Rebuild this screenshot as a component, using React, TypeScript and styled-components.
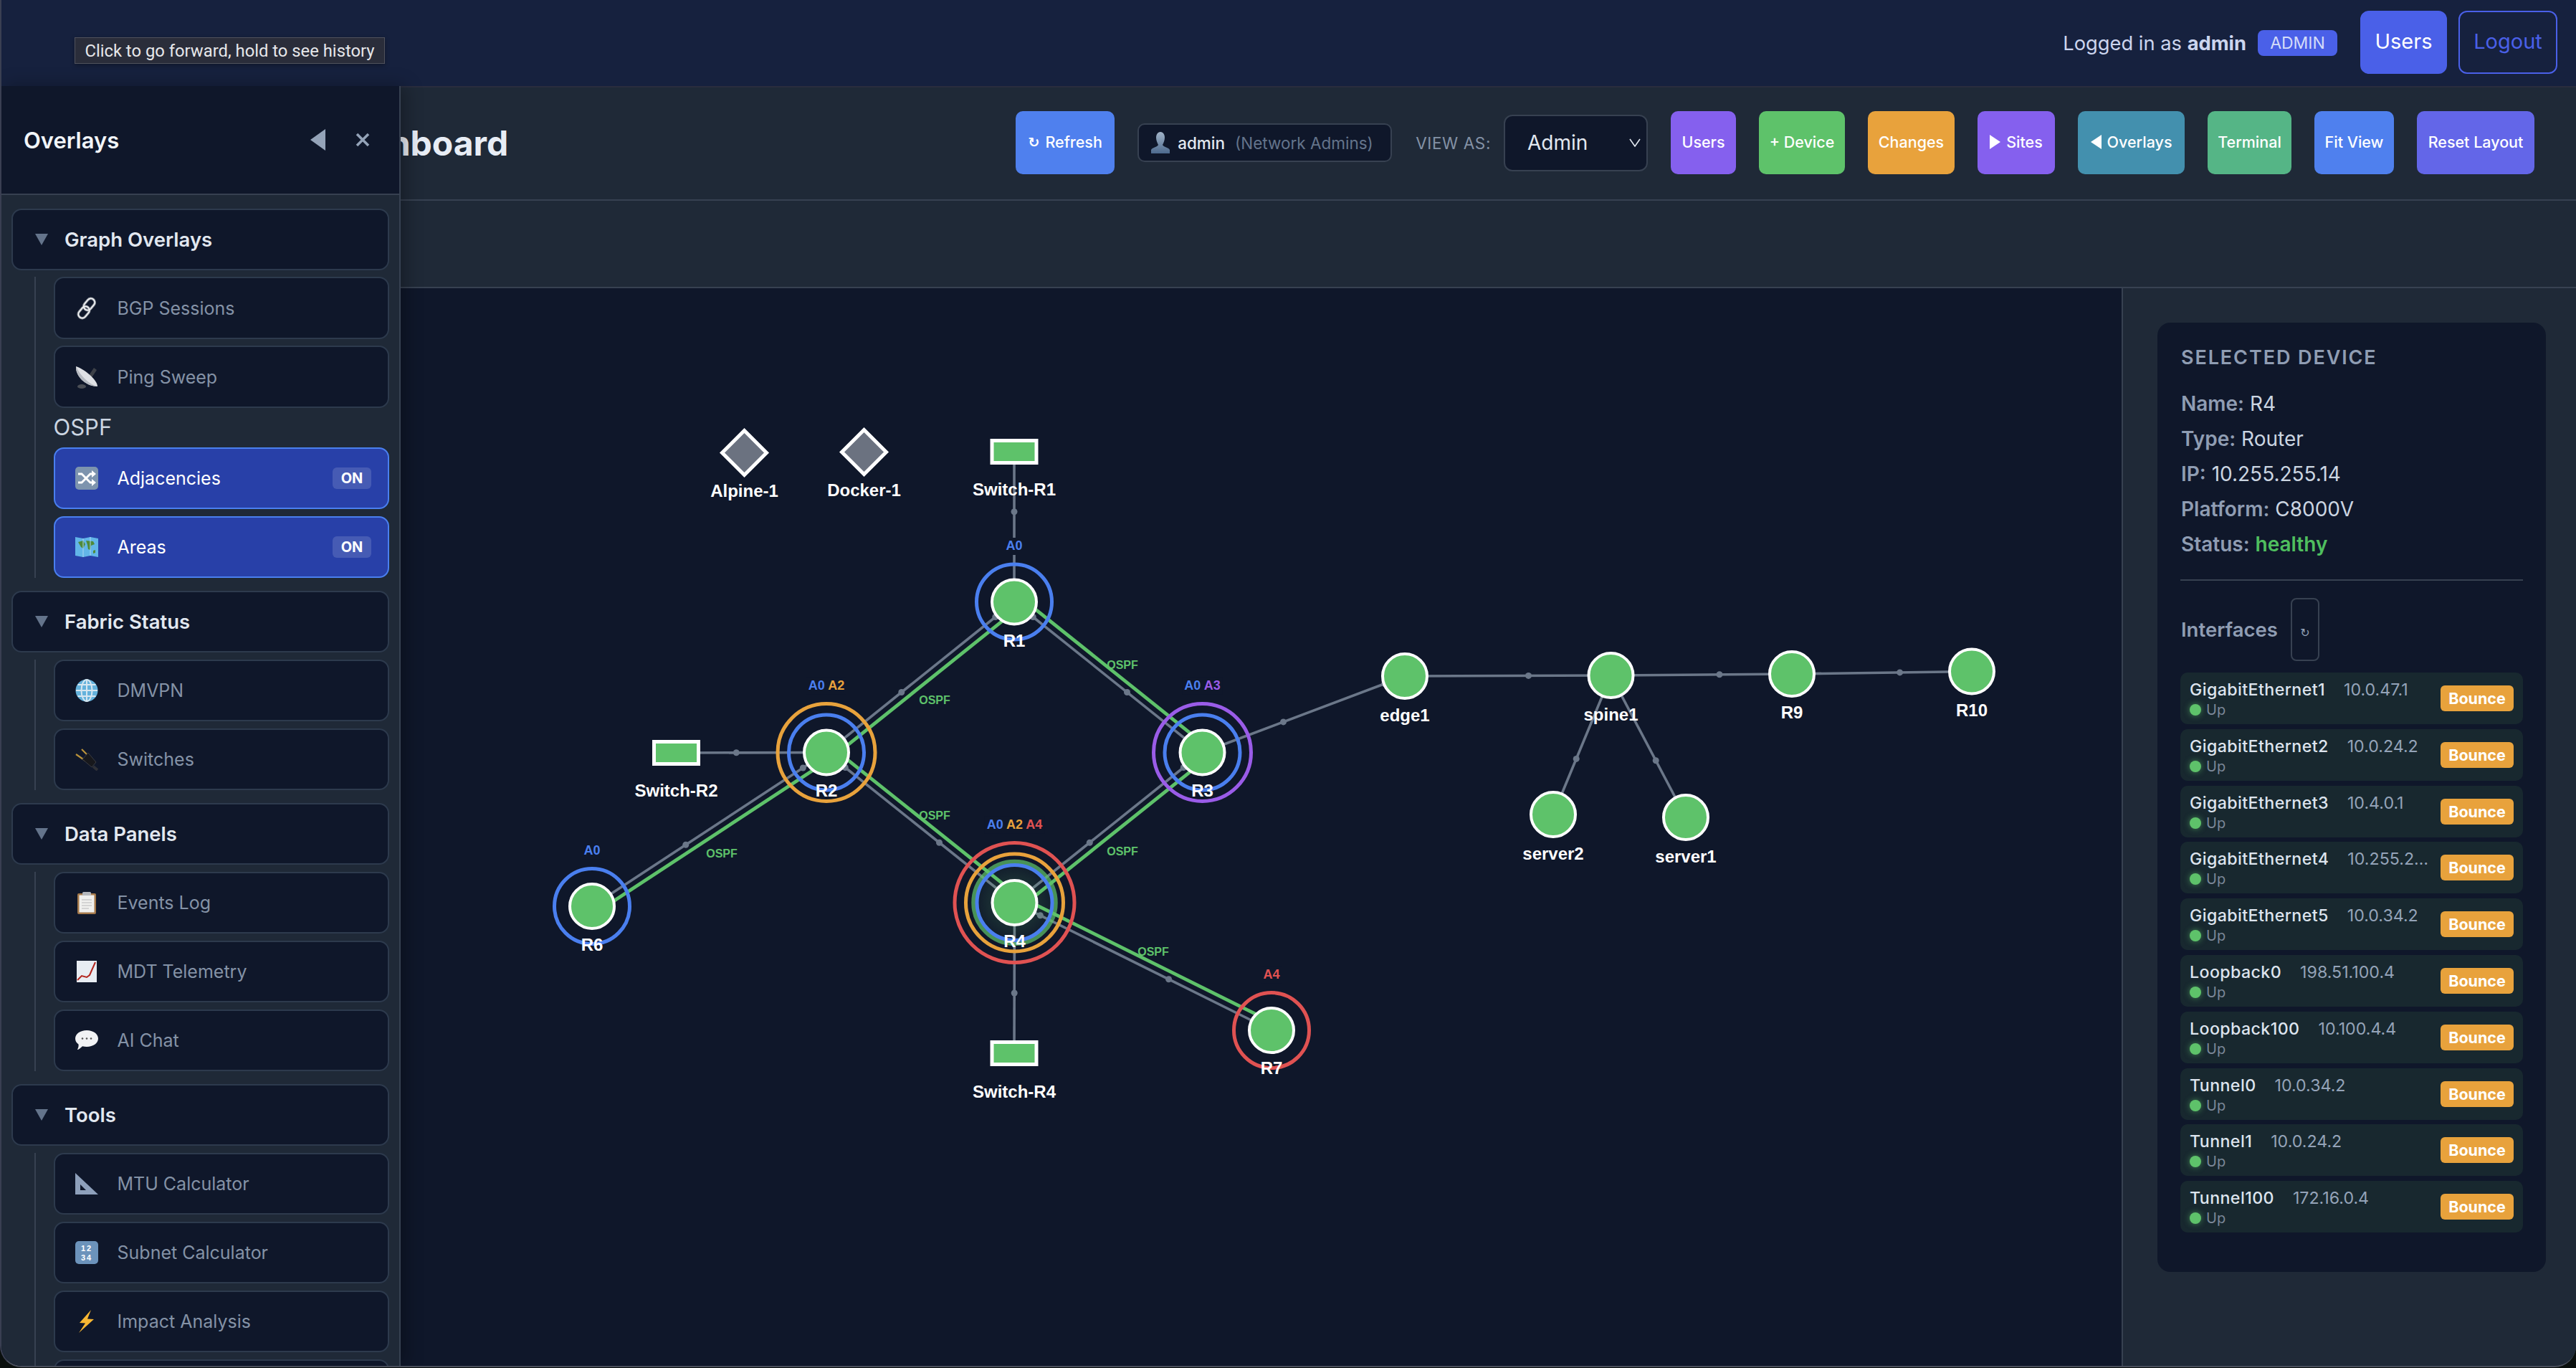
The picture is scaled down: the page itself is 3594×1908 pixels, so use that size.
import React from "react";
import styled, { createGlobalStyle } from "styled-components";

const GlobalStyle = createGlobalStyle`
  html, body {
    margin: 0;
    padding: 0;
    background: #0a0f0d;
    font-family: Inter, "Liberation Sans", sans-serif;
  }
  * { box-sizing: border-box; }
`;

const Frame = styled.div`
  position: relative;
  width: 3594px;
  height: 1907px;
  display: flex;
  flex-direction: column;
  overflow: hidden;
  background: #1f2937;
  border-left: 2px solid #3a3f52;
  border-bottom: 2px solid #4a4f5c;
  border-radius: 0 0 30px 30px;
`;

const Header = styled.header`
  height: 122px;
  flex: none;
  display: flex;
  align-items: center;
  justify-content: flex-end;
  gap: 16px;
  padding: 0 26px 2px 0;
  background: #16213e;
  border-bottom: 2px solid #2a2d3e;
`;

const LoggedIn = styled.div`
  display: flex;
  align-items: center;
  gap: 16px;
  margin-right: 16px;
  padding-top: 2px;
  font-size: 27.3px;
  color: #ccd5ee;
  b { font-weight: 700; }
`;

const RoleBadge = styled.span`
  width: 111px;
  height: 36px;
  display: flex;
  align-items: center;
  justify-content: center;
  border-radius: 8px;
  background: #4a60e8;
  color: #d4dcf8;
  font-size: 23px;
`;

const HeaderButton = styled.button<{ $outline?: boolean; $w: number }>`
  width: ${(p) => p.$w}px;
  height: 88px;
  padding: 0 0 4px;
  border-radius: 12px;
  border: 2px solid #4a60e8;
  background: ${(p) => (p.$outline ? "transparent" : "#4a60e8")};
  color: ${(p) => (p.$outline ? "#4a60e8" : "#fff")};
  font-family: inherit;
  font-size: 29px;
`;

const Toolbar = styled.div`
  height: 158px;
  flex: none;
  display: flex;
  align-items: center;
  justify-content: space-between;
  padding: 0 58px 2px 8px;
  background: #1f2937;
  border-bottom: 2px solid #374151;
`;

const Title = styled.h1`
  margin: 0;
  font-size: 48px;
  font-weight: 700;
  color: #e8edf5;
  white-space: nowrap;
`;

const Actions = styled.div`
  display: flex;
  align-items: center;
  gap: 32px;
`;

const ActionButton = styled.button<{ $bg: string; $w: number }>`
  width: ${(p) => p.$w}px;
  height: 88px;
  display: flex;
  align-items: center;
  justify-content: center;
  gap: 8px;
  padding: 0 0 3px;
  border: none;
  border-radius: 10px;
  background: ${(p) => p.$bg};
  color: #fff;
  font-family: inherit;
  font-size: 21.5px;
  font-weight: 500;
  white-space: nowrap;
`;

const RefreshGlyph = styled.span`
  font-family: "DejaVu Sans", sans-serif;
  font-size: 19px;
  font-weight: 700;
`;

const Triangle = styled.span<{ $dir: "left" | "right"; $w: number; $h: number; $color?: string }>`
  display: inline-block;
  flex: none;
  width: 0;
  height: 0;
  border-top: ${(p) => p.$h / 2}px solid transparent;
  border-bottom: ${(p) => p.$h / 2}px solid transparent;
  ${(p) =>
    p.$dir === "left"
      ? `border-right: ${p.$w}px solid ${p.$color || "#fff"};`
      : `border-left: ${p.$w}px solid ${p.$color || "#fff"};`}
`;

const UserChip = styled.div`
  width: 355px;
  height: 54px;
  display: flex;
  align-items: center;
  gap: 10px;
  padding-left: 16px;
  border: 2px solid #374151;
  border-radius: 10px;
  background: #0f172a;
  color: #e2e8f0;
  font-size: 22.5px;
  font-weight: 500;
  white-space: nowrap;
`;

const UserGroup = styled.span`
  margin-left: 4px;
  color: #64748b;
  font-weight: 400;
`;

const ViewAs = styled.div`
  display: flex;
  align-items: center;
  gap: 18px;
  margin-left: 1px;
`;

const ViewLabel = styled.span`
  color: #8492a6;
  font-size: 22.5px;
  letter-spacing: 0.6px;
  white-space: nowrap;
`;

const ViewSelect = styled.div`
  width: 201px;
  height: 79px;
  display: flex;
  align-items: center;
  justify-content: space-between;
  padding: 0 8px 0 31px;
  border: 2px solid #374151;
  border-radius: 12px;
  background: #0f172a;
  color: #e2e8f0;
  font-size: 28px;
`;

const TabBar = styled.div`
  height: 122px;
  flex: none;
  background: #1f2937;
  border-bottom: 2px solid #374151;
`;

const Content = styled.main`
  flex: 1;
  min-height: 0;
  display: flex;
`;

const Canvas = styled.div`
  flex: 1;
  min-width: 0;
  background: #0f172a;
`;

const GraphSvg = styled.svg`
  display: block;
  width: 100%;
  height: 100%;
  font-family: "Liberation Sans", Arial, sans-serif;
  font-weight: 700;
`;

const SidePanel = styled.aside`
  width: 634px;
  flex: none;
  padding: 48px 42px 0 48px;
  background: #1f2937;
  border-left: 2px solid #374151;
`;

const Card = styled.div`
  height: 1324px;
  padding: 32px 32px 0 33px;
  border-radius: 18px;
  background: #0f172a;
`;

const CardTitle = styled.div`
  height: 34px;
  line-height: 34px;
  margin-bottom: 23px;
  font-size: 27px;
  font-weight: 600;
  letter-spacing: 1.9px;
  color: #8f9db3;
`;

const Info = styled.div`
  height: 49px;
  line-height: 49px;
  font-size: 28px;
  color: #cbd5e1;
  b { font-weight: 600; color: #8f9db3; }
`;

const Healthy = styled.span`
  color: #4fbf5f;
  font-weight: 600;
`;

const Divider = styled.hr`
  height: 2px;
  margin: 24px 0 24px -1px;
  border: none;
  background: #374151;
`;

const IfHead = styled.div`
  height: 88px;
  display: flex;
  align-items: center;
  gap: 18px;
  margin-bottom: 16px;
  font-size: 27.5px;
  font-weight: 600;
  color: #8f9db3;
`;

const MiniRefresh = styled.button`
  width: 40px;
  height: 88px;
  padding: 8px 0 0;
  border: 2px solid #374151;
  border-radius: 8px;
  background: transparent;
  color: #94a3b8;
  font-family: "DejaVu Sans", sans-serif;
  font-size: 16px;
`;

const IfList = styled.div`
  display: flex;
  flex-direction: column;
  gap: 6.8px;
  margin-left: -1px;
`;

const IfRow = styled.div`
  width: 478px;
  height: 72px;
  display: flex;
  align-items: center;
  padding: 0 13px;
  border-radius: 10px;
  background: #18282f;
`;

const IfMain = styled.div`
  flex: 1;
  min-width: 0;
  padding-right: 12px;
`;

const IfLine = styled.div`
  display: flex;
  gap: 26px;
  height: 32px;
  line-height: 32px;
  font-size: 23.2px;
  white-space: nowrap;
`;

const IfName = styled.span`
  flex: none;
  font-weight: 500;
  color: #dde4ee;
  letter-spacing: 0.4px;
`;

const IfAddr = styled.span`
  min-width: 0;
  overflow: hidden;
  text-overflow: ellipsis;
  color: #94a3b8;
`;

const IfState = styled.div`
  display: flex;
  align-items: center;
  gap: 7px;
  height: 24px;
  font-size: 20px;
  color: #7b8798;
`;

const StatusDot = styled.span`
  width: 16px;
  height: 16px;
  border-radius: 50%;
  background: #5ec26a;
  box-shadow: 0 0 8px rgba(94, 194, 106, 0.6);
`;

const BounceButton = styled.button`
  width: 102px;
  height: 36px;
  flex: none;
  padding: 0;
  border: none;
  border-radius: 6px;
  background: #e8a23c;
  color: #fff;
  font-family: inherit;
  font-size: 21.5px;
  font-weight: 700;
`;

const Drawer = styled.aside`
  position: absolute;
  top: 120px;
  left: 0;
  bottom: 0;
  width: 557px;
  display: flex;
  flex-direction: column;
  overflow: hidden;
  background: #1f2937;
  border-right: 2px solid #374151;
  box-shadow: 6px 0 24px rgba(0, 0, 0, 0.3);
`;

const DrawerHead = styled.div`
  height: 152px;
  flex: none;
  display: flex;
  align-items: center;
  padding: 0 41px 0 31px;
  background: #0f172a;
  border-bottom: 2px solid #374151;
`;

const DrawerTitle = styled.div`
  flex: 1;
  color: #f1f5f9;
  font-size: 31px;
  font-weight: 600;
`;

const DrawerBody = styled.div`
  display: flex;
  flex-direction: column;
  gap: 17.6px;
  padding: 18.5px 14px 0 14px;
`;

const Group = styled.section`
  display: flex;
  flex-direction: column;
  gap: 9.6px;
`;

const GroupHead = styled.div`
  height: 86.4px;
  display: flex;
  align-items: center;
  gap: 23px;
  padding-left: 31px;
  border: 2px solid #2d3a4d;
  border-radius: 14px;
  background: #0f172a;
  color: #e2e8f0;
  font-size: 27.5px;
  font-weight: 600;
`;

const GroupArrow = styled.span`
  width: 0;
  height: 0;
  border-left: 9px solid transparent;
  border-right: 9px solid transparent;
  border-top: 16px solid #64748b;
`;

const GroupItems = styled.div`
  display: flex;
  flex-direction: column;
  gap: 9.6px;
  margin-left: 32px;
  padding-left: 24.5px;
  border-left: 2px solid #374151;
`;

const SubLabel = styled.div`
  height: 36px;
  line-height: 36px;
  color: #cbd5e1;
  font-size: 31px;
`;

const Item = styled.div<{ $on?: boolean }>`
  height: 86.4px;
  flex: none;
  display: flex;
  align-items: center;
  gap: 27px;
  padding: 0 23px 0 28px;
  border: 2px solid ${(p) => (p.$on ? "#4a7fef" : "#2d3a4d")};
  border-radius: 14px;
  background: ${(p) => (p.$on ? "#2840a8" : "#0f172a")};
  color: ${(p) => (p.$on ? "#fff" : "#8492a6")};
  font-size: 25px;
`;

const ItemLabel = styled.span`
  flex: 1;
`;

const OnBadge = styled.span`
  width: 54px;
  height: 30px;
  display: flex;
  align-items: center;
  justify-content: center;
  border-radius: 6px;
  background: rgba(255, 255, 255, 0.14);
  color: #fff;
  font-size: 20px;
  font-weight: 700;
`;

const TooltipBox = styled.div`
  position: absolute;
  top: 52px;
  left: 102px;
  width: 433px;
  height: 37px;
  display: flex;
  align-items: center;
  justify-content: center;
  border: 1px solid #50525c;
  background: #2a2d3a;
  box-shadow: 0 2px 6px rgba(0, 0, 0, 0.35);
  color: #e6e7ea;
  font-family: Roboto, sans-serif;
  font-size: 23.8px;
  white-space: nowrap;
`;

// emoji stand-ins, the sandbox has no colour emoji font
const icons: Record<string, React.ReactNode> = {
  link: (
    <g fill="none">
      <g stroke="#8e939b" strokeWidth="3.6">
        <rect x="14" y="1.500" width="11" height="18" rx="5.5" transform="rotate(40 19.500 10.500)" />
        <rect x="6.500" y="12.500" width="11" height="18" rx="5.5" transform="rotate(40 12 21.500)" />
      </g>
      <g stroke="#f3f4f6" strokeWidth="1.6">
        <rect x="14" y="1.500" width="11" height="18" rx="5.5" transform="rotate(40 19.500 10.500)" />
        <rect x="6.500" y="12.500" width="11" height="18" rx="5.5" transform="rotate(40 12 21.500)" />
      </g>
    </g>
  ),
  dish: (
    <>
      <ellipse cx="9" cy="29" rx="6" ry="3" fill="#4a4e55" />
      <path d="M18 15l8-12 4 3-8 12z" fill="#3d4148" />
      <path d="M1 1c-1 13 13 28 30 28C31 20 12 4 1 1z" fill="#dfe1e5" />
      <path d="M1 1c-1 13 13 28 30 28C19 26 7 14 1 1z" fill="#b6bac1" />
    </>
  ),
  shuffle: (
    <>
      <rect width="32" height="32" rx="5" fill="#7d94ae" />
      <path d="M4 10h5l12 12h4M4 22h5l12-12h4" fill="none" stroke="#fff" strokeWidth="2.8" />
      <path d="M23 5l6 5-6 5zM23 17l6 5-6 5z" fill="#fff" />
    </>
  ),
  map: (
    <>
      <path d="M0 2l11 2 10-2 11 2v26l-11-2-10 2-11-2z" fill="#62b5e8" />
      <path d="M4 9l7-2 3 5-3 6-3-2zM15 7l10 1 2 4-5 2-1 6-3-1-1-6zM25 21l3-1v4l-3 1z" fill="#4f8a3a" />
      <path d="M11 4v26M21 2v26" stroke="#a9d6f2" strokeWidth="1" />
    </>
  ),
  globe: (
    <>
      <circle cx="16" cy="16" r="15.5" fill="#64b2dc" />
      <g fill="none" stroke="#d6e6f0" strokeWidth="2">
        <ellipse cx="16" cy="16" rx="7.5" ry="15" />
        <path d="M16 1v30M1 16h30M3.5 8h25M3.5 24h25" />
      </g>
    </>
  ),
  plug: (
    <>
      <path d="M1 9l13 9M9 2l10 10" stroke="#b9923a" strokeWidth="2.2" />
      <path d="M10 16l8-9 11 13-6 7z" fill="#17181c" stroke="#3a3c42" strokeWidth="1" />
      <path d="M25 26l6 5" stroke="#2e3036" strokeWidth="4" />
    </>
  ),
  clipboard: (
    <>
      <rect x="3" y="3" width="26" height="29" rx="2" fill="#a5794a" />
      <rect x="5.5" y="5.5" width="21" height="24" fill="#f0f0ee" />
      <rect x="10" y="1" width="12" height="5" rx="1.5" fill="#b5b8bd" />
      <path d="M9 12h14M9 16h14M9 20h14M9 24h10" stroke="#d4d4d4" strokeWidth="2" />
    </>
  ),
  chart: (
    <>
      <rect x="2" y="1" width="28" height="30" fill="#e8edf3" />
      <path d="M3 28l6-6 7 2 4-3 8-18" fill="none" stroke="#b3261e" strokeWidth="2" />
    </>
  ),
  chat: (
    <>
      <path d="M16 2c9 0 16 5 16 11.5S25 25 16 25c-2 0-4-.2-6-.8C8 26 5 29 3 29c1-2 2-5 1.500-7.500C1.500 19.500 0 16.500 0 13.500 0 7 7 2 16 2z" fill="#f1f2f4" />
      <circle cx="10" cy="13.500" r="1.300" fill="#555" />
      <circle cx="16" cy="13.500" r="1.300" fill="#555" />
      <circle cx="22" cy="13.500" r="1.300" fill="#555" />
    </>
  ),
  ruler: <path d="M0 1l32 30H0zM7 17v8h8z" fill="#8ea0bb" fillRule="evenodd" />,
  numbers: (
    <>
      <rect width="32" height="32" rx="5" fill="#6c93bb" />
      <text x="16" y="13.500" textAnchor="middle" fontSize="11" fontWeight="700" fill="#fff" fontFamily="Liberation Sans, sans-serif" letterSpacing="2">12</text>
      <text x="16" y="27" textAnchor="middle" fontSize="11" fontWeight="700" fill="#fff" fontFamily="Liberation Sans, sans-serif" letterSpacing="2">34</text>
    </>
  ),
  bolt: <path d="M22 0L6 18l8 .5L5 32l21-19-9-.5z" fill="#f7b733" />,
};

function Emoji({ name, size = 32 }: { name: string; size?: number }) {
  return (
    <svg width={size} height={size} viewBox="0 0 32 32" style={{ flex: "none" }}>
      {icons[name]}
    </svg>
  );
}

type Entry = { label?: string; icon?: string; on?: boolean; heading?: string };

const groups: { title: string; items: Entry[] }[] = [
  {
    title: "Graph Overlays",
    items: [
      { label: "BGP Sessions", icon: "link" },
      { label: "Ping Sweep", icon: "dish" },
      { heading: "OSPF" },
      { label: "Adjacencies", icon: "shuffle", on: true },
      { label: "Areas", icon: "map", on: true },
    ],
  },
  {
    title: "Fabric Status",
    items: [
      { label: "DMVPN", icon: "globe" },
      { label: "Switches", icon: "plug" },
    ],
  },
  {
    title: "Data Panels",
    items: [
      { label: "Events Log", icon: "clipboard" },
      { label: "MDT Telemetry", icon: "chart" },
      { label: "AI Chat", icon: "chat" },
    ],
  },
  {
    title: "Tools",
    items: [
      { label: "MTU Calculator", icon: "ruler" },
      { label: "Subnet Calculator", icon: "numbers" },
      { label: "Impact Analysis", icon: "bolt" },
      {},
    ],
  },
];

const actions = [
  { label: "Users", bg: "#8560ee", w: 91 },
  { label: "+ Device", bg: "#5ec26a", w: 120 },
  { label: "Changes", bg: "#e8a23c", w: 121 },
  { label: "Sites", bg: "#8560ee", w: 108, arrow: "right" as const },
  { label: "Overlays", bg: "#4390ae", w: 149, arrow: "left" as const },
  { label: "Terminal", bg: "#55b586", w: 117 },
  { label: "Fit View", bg: "#4f80ee", w: 111 },
  { label: "Reset Layout", bg: "#6366e8", w: 164 },
];

const interfaces = [
  ["GigabitEthernet1", "10.0.47.1"],
  ["GigabitEthernet2", "10.0.24.2"],
  ["GigabitEthernet3", "10.4.0.1"],
  ["GigabitEthernet4", "10.255.255.14"],
  ["GigabitEthernet5", "10.0.34.2"],
  ["Loopback0", "198.51.100.4"],
  ["Loopback100", "10.100.4.4"],
  ["Tunnel0", "10.0.34.2"],
  ["Tunnel1", "10.0.24.2"],
  ["Tunnel100", "172.16.0.4"],
];

const BLUE = "#4a7fef";
const ORANGE = "#e8a23c";
const PURPLE = "#9a5ce8";
const RED = "#e05252";
const GREEN = "#5ec26a";
const GRAY = "#6b7789";

type GNode = {
  id: string;
  x: number;
  y: number;
  labelY: number;
  kind?: "switch" | "host";
  rings?: string[];
  areas?: [string, string][];
};

const nodes: GNode[] = [
  { id: "Alpine-1", x: 1038.5, y: 631.5, labelY: 684, kind: "host" },
  { id: "Docker-1", x: 1205.5, y: 630.5, labelY: 683, kind: "host" },
  { id: "Switch-R1", x: 1415, y: 630, labelY: 682, kind: "switch" },
  { id: "Switch-R2", x: 943.5, y: 1050, labelY: 1102, kind: "switch" },
  { id: "Switch-R4", x: 1415, y: 1469, labelY: 1522, kind: "switch" },
  { id: "R1", x: 1415, y: 839.5, labelY: 893, rings: [BLUE], areas: [["A0", BLUE]] },
  { id: "R2", x: 1153, y: 1049.5, labelY: 1102, rings: [BLUE, ORANGE], areas: [["A0", BLUE], ["A2", ORANGE]] },
  { id: "R3", x: 1677.5, y: 1049.5, labelY: 1102, rings: [BLUE, PURPLE], areas: [["A0", BLUE], ["A3", PURPLE]] },
  { id: "R4", x: 1415.5, y: 1259, labelY: 1312, rings: [BLUE, ORANGE, RED], areas: [["A0", BLUE], ["A2", ORANGE], ["A4", RED]] },
  { id: "R6", x: 826, y: 1264, labelY: 1317, rings: [BLUE], areas: [["A0", BLUE]] },
  { id: "R7", x: 1774, y: 1437, labelY: 1489, rings: [RED], areas: [["A4", RED]] },
  { id: "edge1", x: 1960, y: 943, labelY: 997 },
  { id: "spine1", x: 2247.5, y: 942, labelY: 996 },
  { id: "R9", x: 2500, y: 940, labelY: 993 },
  { id: "R10", x: 2751, y: 936.5, labelY: 990 },
  { id: "server2", x: 2167, y: 1136, labelY: 1190 },
  { id: "server1", x: 2352, y: 1140, labelY: 1194 },
];

const edges: [string, string][] = [
  ["R1", "Switch-R1"],
  ["R1", "R2"],
  ["R1", "R3"],
  ["R2", "Switch-R2"],
  ["R2", "R4"],
  ["R2", "R6"],
  ["R3", "R4"],
  ["R4", "R7"],
  ["R4", "Switch-R4"],
  ["edge1", "R3"],
  ["edge1", "spine1"],
  ["spine1", "R9"],
  ["R9", "R10"],
  ["spine1", "server2"],
  ["spine1", "server1"],
];

const ospfPairs = [
  ["R1", "R2"],
  ["R1", "R3"],
  ["R2", "R4"],
  ["R2", "R6"],
  ["R3", "R4"],
  ["R4", "R7"],
];

const ospfLabels = [
  [1566, 933],
  [1304, 982],
  [1304, 1143],
  [1566, 1193],
  [1007, 1196],
  [1609, 1333],
];

const byId = (id: string) => nodes.find((n) => n.id === id) as GNode;

function Graph() {
  return (
    <GraphSvg viewBox="2 402 2958 1503" preserveAspectRatio="xMinYMin slice">
      <defs>
        <radialGradient id="selGlow">
          <stop offset="55%" stopColor={GREEN} stopOpacity="0.14" />
          <stop offset="100%" stopColor={GREEN} stopOpacity="0.02" />
        </radialGradient>
      </defs>
      {edges.map(([a, b]) => {
        const s = byId(a);
        const t = byId(b);
        return (
          <g key={a + b} fill={GRAY}>
            <line x1={s.x} y1={s.y} x2={t.x} y2={t.y} stroke={GRAY} strokeWidth={3.6} />
            <circle cx={s.x + (t.x - s.x) * 0.6} cy={s.y + (t.y - s.y) * 0.6} r={4.5} />
            <circle cx={s.x + (t.x - s.x) * 0.1} cy={s.y + (t.y - s.y) * 0.1} r={4.5} />
          </g>
        );
      })}
      {ospfPairs.map(([a, b]) => {
        const s = byId(a);
        const t = byId(b);
        const dx = t.x - s.x;
        const dy = t.y - s.y;
        const len = Math.hypot(dx, dy);
        // always offset to the right of the grey link
        const nx = (Math.abs(dy) / len) * 10.5;
        const ny = ((dx * dy > 0 ? -Math.abs(dx) : Math.abs(dx)) / len) * 10.5;
        return <line key={a + b} x1={s.x + nx} y1={s.y + ny} x2={t.x + nx} y2={t.y + ny} stroke={GREEN} strokeWidth={4.8} />;
      })}
      {ospfLabels.map(([x, y]) => (
        <text key={x + "-" + y} x={x} y={y} textAnchor="middle" fontSize={16} fill={GREEN}>
          OSPF
        </text>
      ))}
      {nodes.map((n) => (
        <g key={n.id}>
          {n.id === "R4" && (
            <>
              <circle cx={n.x} cy={n.y} r={56} fill="url(#selGlow)" />
              <circle cx={n.x} cy={n.y} r={57} fill="none" stroke={GREEN} strokeOpacity={0.72} strokeWidth={6.5} />
            </>
          )}
          {n.rings?.map((c, i) => (
            <circle key={c} cx={n.x} cy={n.y} r={52.5 + i * 15.5} fill="none" stroke={c} strokeWidth={5} />
          ))}
          {n.kind === "switch" && (
            <rect x={n.x - 31} y={n.y - 15.5} width={62} height={31} fill={GREEN} stroke="#fff" strokeWidth={5} />
          )}
          {n.kind === "host" && (
            <path
              d={`M${n.x} ${n.y - 31}L${n.x + 31} ${n.y}L${n.x} ${n.y + 31}L${n.x - 31} ${n.y}Z`}
              fill="#6b7280"
              stroke="#fff"
              strokeWidth={5}
            />
          )}
          {!n.kind && <circle cx={n.x} cy={n.y} r={31} fill={GREEN} stroke="#fff" strokeWidth={4} />}
          {n.areas && (
            <>
              <rect
                x={n.x - n.areas.length * 14}
                y={n.y - (52.5 + (n.rings!.length - 1) * 15.5) - 37}
                width={n.areas.length * 28}
                height={24}
                fill="#0f172a"
              />
              <text x={n.x} y={n.y - (52.5 + (n.rings!.length - 1) * 15.5) - 20} textAnchor="middle" fontSize={18}>
                {n.areas.map(([a, c], i) => (
                  <tspan key={a} fill={c}>
                    {(i > 0 ? " " : "") + a}
                  </tspan>
                ))}
              </text>
            </>
          )}
          <text x={n.x} y={n.labelY + 8.5} textAnchor="middle" fontSize={24} fill="#fff">
            {n.id}
          </text>
        </g>
      ))}
    </GraphSvg>
  );
}

export default function App() {
  return (
    <Frame>
      <GlobalStyle />
      <Header>
        <LoggedIn>
          <span>
            Logged in as <b>admin</b>
          </span>
          <RoleBadge>ADMIN</RoleBadge>
        </LoggedIn>
        <HeaderButton $w={121}>Users</HeaderButton>
        <HeaderButton $w={138} $outline>
          Logout
        </HeaderButton>
      </Header>
      <Toolbar>
        <Title>Network Topology Dashboard</Title>
        <Actions>
          <ActionButton $bg="#4f80ee" $w={138}>
            <RefreshGlyph>↻</RefreshGlyph>
            Refresh
          </ActionButton>
          <UserChip>
            <svg width="28" height="30" viewBox="0 0 28 30" style={{ flex: "none" }}>
              <defs>
                <linearGradient id="bust" x1="0" y1="0" x2="0" y2="1">
                  <stop offset="0%" stopColor="#a2b4c8" />
                  <stop offset="100%" stopColor="#4d6a8e" />
                </linearGradient>
              </defs>
              <path d="M14 0c4 0 6 4 6 8 0 4-2 8-3 10 1 3 9 4 10 7v5H1v-5c1-3 9-4 10-7-1-2-3-6-3-10 0-4 2-8 6-8z" fill="url(#bust)" />
            </svg>
            <span>admin</span>
            <UserGroup>(Network Admins)</UserGroup>
          </UserChip>
          <ViewAs>
            <ViewLabel>VIEW AS:</ViewLabel>
            <ViewSelect>
              Admin
              <svg width="16" height="12" viewBox="0 0 16 12">
                <path d="M1 1l7 10 7-10" fill="none" stroke="#e2e8f0" strokeWidth="1.6" />
              </svg>
            </ViewSelect>
          </ViewAs>
          {actions.map((a) => (
            <ActionButton key={a.label} $bg={a.bg} $w={a.w}>
              {a.arrow && <Triangle $dir={a.arrow} $w={15} $h={20} />}
              {a.label}
            </ActionButton>
          ))}
        </Actions>
      </Toolbar>
      <TabBar />
      <Content>
        <Canvas>
          <Graph />
        </Canvas>
        <SidePanel>
          <Card>
            <CardTitle>SELECTED DEVICE</CardTitle>
            <Info>
              <b>Name:</b> R4
            </Info>
            <Info>
              <b>Type:</b> Router
            </Info>
            <Info>
              <b>IP:</b> 10.255.255.14
            </Info>
            <Info>
              <b>Platform:</b> C8000V
            </Info>
            <Info>
              <b>Status:</b> <Healthy>healthy</Healthy>
            </Info>
            <Divider />
            <IfHead>
              Interfaces
              <MiniRefresh>↻</MiniRefresh>
            </IfHead>
            <IfList>
              {interfaces.map(([name, addr]) => (
                <IfRow key={name}>
                  <IfMain>
                    <IfLine>
                      <IfName>{name}</IfName>
                      <IfAddr>{addr}</IfAddr>
                    </IfLine>
                    <IfState>
                      <StatusDot />
                      Up
                    </IfState>
                  </IfMain>
                  <BounceButton>Bounce</BounceButton>
                </IfRow>
              ))}
            </IfList>
          </Card>
        </SidePanel>
      </Content>
      <Drawer>
        <DrawerHead>
          <DrawerTitle>Overlays</DrawerTitle>
          <Triangle $dir="left" $w={21} $h={30} $color="#94a3b8" />
          <svg width="20" height="20" viewBox="0 0 20 20" style={{ marginLeft: 42 }}>
            <path d="M2 2l16 16M18 2L2 18" stroke="#94a3b8" strokeWidth="3.6" />
          </svg>
        </DrawerHead>
        <DrawerBody>
          {groups.map((g) => (
            <Group key={g.title}>
              <GroupHead>
                <GroupArrow />
                {g.title}
              </GroupHead>
              <GroupItems>
                {g.items.map((it, i) =>
                  it.heading ? (
                    <SubLabel key={i}>{it.heading}</SubLabel>
                  ) : (
                    <Item key={i} $on={it.on}>
                      {it.icon && <Emoji name={it.icon} />}
                      <ItemLabel>{it.label}</ItemLabel>
                      {it.on && <OnBadge>ON</OnBadge>}
                    </Item>
                  )
                )}
              </GroupItems>
            </Group>
          ))}
        </DrawerBody>
      </Drawer>
      <TooltipBox>Click to go forward, hold to see history</TooltipBox>
    </Frame>
  );
}
